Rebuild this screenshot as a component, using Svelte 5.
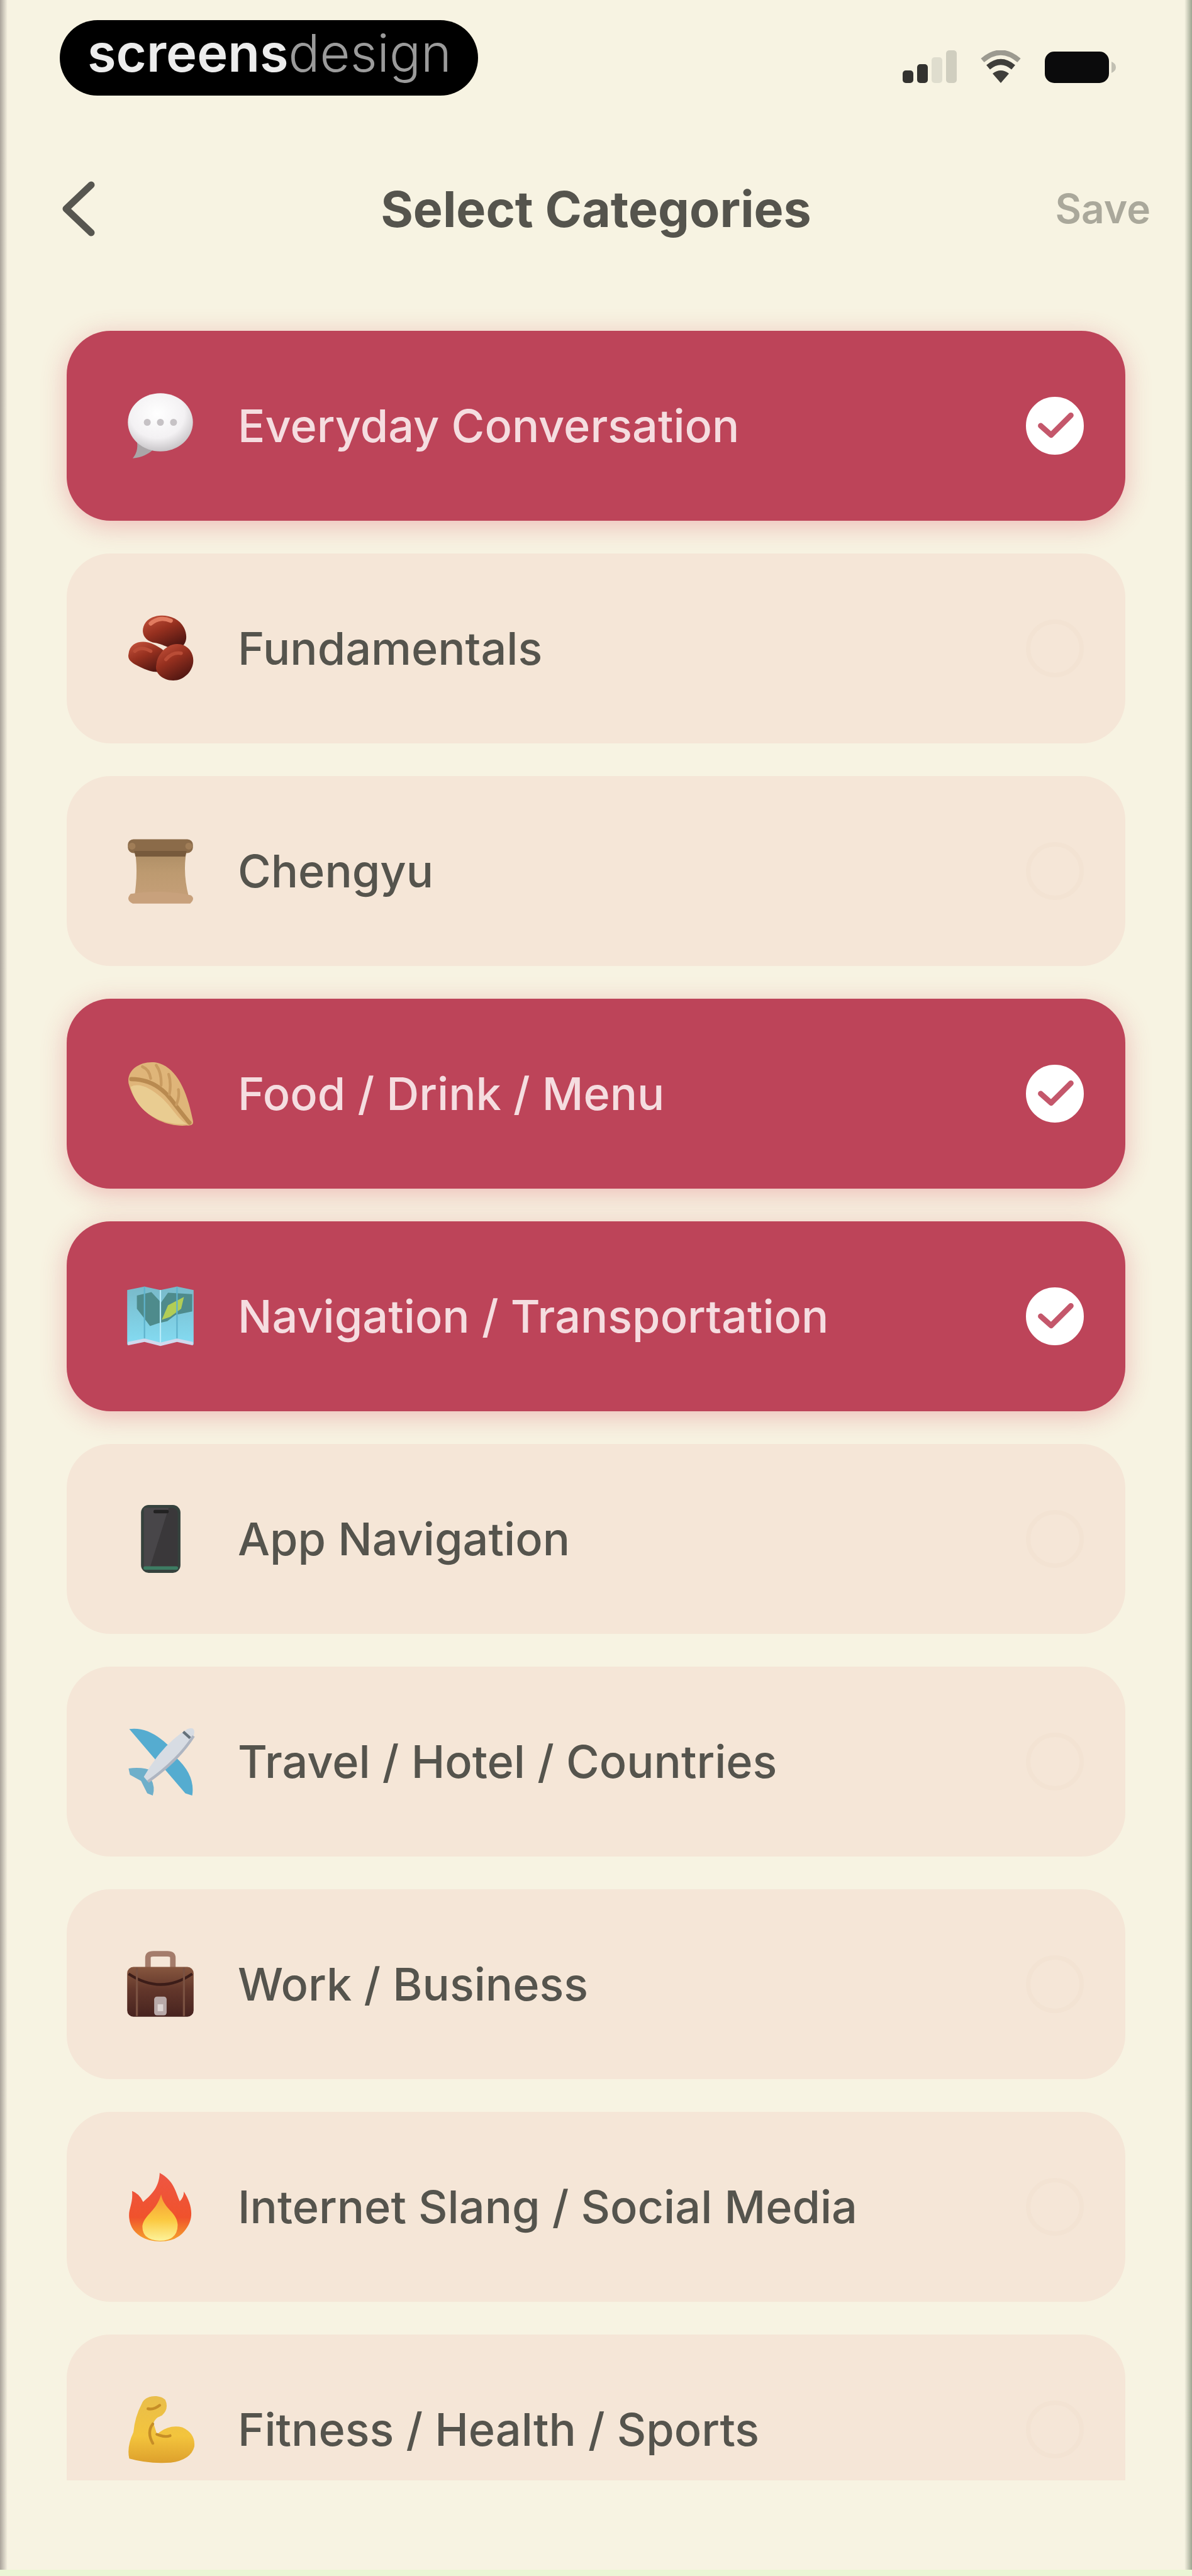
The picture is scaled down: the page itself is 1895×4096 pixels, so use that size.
<script>
  let categories = $state([
    { id: 'chat', name: 'Everyday Conversation', selected: true },
    { id: 'beans', name: 'Fundamentals', selected: false },
    { id: 'scroll', name: 'Chengyu', selected: false },
    { id: 'dumpling', name: 'Food / Drink / Menu', selected: true },
    { id: 'map', name: 'Navigation / Transportation', selected: true },
    { id: 'phone', name: 'App Navigation', selected: false },
    { id: 'plane', name: 'Travel / Hotel / Countries', selected: false },
    { id: 'briefcase', name: 'Work / Business', selected: false },
    { id: 'fire', name: 'Internet Slang / Social Media', selected: false },
    { id: 'arm', name: 'Fitness / Health / Sports', selected: false }
  ]);
</script>

<svg class="defs" aria-hidden="true">
  <defs>
    <radialGradient id="bubble" cx=".45" cy=".35" r=".65">
      <stop offset="0" stop-color="#fff" /><stop offset=".65" stop-color="#f3f1f3" /><stop offset="1" stop-color="#c9c6c9" />
    </radialGradient>
    <linearGradient id="bean" x1="0" y1="0" x2=".6" y2="1">
      <stop offset="0" stop-color="#c9563f" /><stop offset=".5" stop-color="#96301f" /><stop offset="1" stop-color="#521712" />
    </linearGradient>
    <linearGradient id="paper" x1="0" y1="0" x2="0" y2="1">
      <stop offset="0" stop-color="#a98a62" /><stop offset=".5" stop-color="#bd9a70" /><stop offset="1" stop-color="#c59f78" />
    </linearGradient>
    <linearGradient id="sea" x1="0" y1="0" x2="0" y2="1">
      <stop offset="0" stop-color="#79b9c9" /><stop offset="1" stop-color="#84dcf3" />
    </linearGradient>
    <linearGradient id="leather" x1="0" y1="0" x2="0" y2="1">
      <stop offset="0" stop-color="#87573f" /><stop offset=".45" stop-color="#63372b" /><stop offset="1" stop-color="#47231f" />
    </linearGradient>
    <linearGradient id="flame" x1="0" y1="0" x2="0" y2="1">
      <stop offset="0" stop-color="#ee5643" /><stop offset=".65" stop-color="#f0522c" /><stop offset="1" stop-color="#f6a52c" />
    </linearGradient>
    <linearGradient id="core" x1="0" y1="0" x2="0" y2="1">
      <stop offset="0" stop-color="#f59a35" /><stop offset=".55" stop-color="#fbc940" /><stop offset="1" stop-color="#fdf39a" />
    </linearGradient>
    <linearGradient id="skin" x1="0" y1="0" x2="0" y2="1">
      <stop offset="0" stop-color="#e9be4b" /><stop offset=".6" stop-color="#f3c43d" /><stop offset="1" stop-color="#dda02c" />
    </linearGradient>
  </defs>
</svg>

<main class="screen">
  <div class="status">
    <div class="brand"><strong>screens</strong><span>design</span></div>
    <div class="indicators" aria-hidden="true">
      <svg width="88" height="54" viewBox="0 0 88 54">
        <rect x="0" y="32" width="17" height="20" rx="5" fill="#33322f" />
        <rect x="23" y="22" width="17" height="30" rx="5" fill="#33322f" />
        <rect x="46" y="11" width="17" height="41" rx="5" fill="#dfddce" />
        <rect x="69" y="0" width="17" height="52" rx="5" fill="#d0cebf" />
      </svg>
      <svg width="68" height="54" viewBox="0 0 68 54">
        <path d="M5 16Q34 -9 63 16" fill="none" stroke="#9c9a90" stroke-width="8" />
        <path d="M14 27Q34 10 54 27" fill="none" stroke="#3f3e3a" stroke-width="9" />
        <path d="M34 52L21 37Q34 27 47 37Z" fill="#3f3e3a" />
      </svg>
      <svg width="116" height="54" viewBox="0 0 116 54">
        <rect x="2" y="2" width="102" height="50" rx="15" fill="#0b0b0c" />
        <path d="M108 18Q115 21 115 27T108 36Z" fill="#c2c0b3" />
      </svg>
    </div>
  </div>

  <header>
    <button class="back" aria-label="Back">
      <svg width="56" height="90" viewBox="0 0 56 90" aria-hidden="true">
        <path d="M49 7L9 45L49 83" fill="none" stroke="#575650" stroke-width="11" stroke-linecap="round" stroke-linejoin="round" />
      </svg>
    </button>
    <h1>Select Categories</h1>
    <button class="save">Save</button>
  </header>

  <div class="list">
    {#each categories as c (c.id)}
      <label class="card" class:selected={c.selected}>
        <svg class="icon" viewBox="0 0 100 100" aria-hidden="true">
          {#if c.id === 'chat'}
            <path d="M15 68Q20 85 10 97Q30 95 42 82Z" fill="#aaa6a8" />
            <ellipse cx="50" cy="45" rx="47" ry="42" fill="url(#bubble)" />
            <g fill="#c6c2c5"><circle cx="31" cy="45" r="5" /><circle cx="50" cy="45" r="5" /><circle cx="69" cy="45" r="5" /></g>
          {:else if c.id === 'beans'}
            <path d="M29 12C42 -3 74 0 84 20C93 38 83 54 67 50C56 47 53 44 43 42C25 40 20 24 29 12Z" fill="url(#bean)" />
            <path d="M4 58C6 40 25 37 40 44C56 51 67 63 61 76C54 89 35 84 21 77C8 71 2 66 4 58Z" fill="url(#bean)" />
            <path d="M50 58C60 42 82 38 93 53C104 69 94 91 74 96C55 99 41 86 44 74Q45 64 50 58Z" fill="url(#bean)" />
            <path d="M36 14Q49 3 65 10" fill="none" stroke="#e17b60" stroke-width="6" stroke-linecap="round" />
            <path d="M13 54Q22 46 36 54M58 66Q67 55 80 57" fill="none" stroke="#b94c36" stroke-width="5" stroke-linecap="round" />
          {:else if c.id === 'scroll'}
            <path d="M12 14H89Q81 50 91 87Q48 82 12 90Q19 48 12 14Z" fill="url(#paper)" />
            <rect x="3" y="4" width="94" height="20" rx="8" fill="#8b6b49" />
            <path d="M12 21H88L86 29H14Z" fill="#775a3c" />
            <path d="M7 83Q50 76 94 85Q101 90 93 97H10Q-1 92 7 83Z" fill="#c8a17c" />
            <circle cx="9" cy="14" r="5" fill="#a07d57" /><circle cx="91" cy="14" r="5" fill="#a07d57" />
          {:else if c.id === 'dumpling'}
            <path d="M4 35C1 15 22 2 44 5C72 11 88 43 97 89Q99 97 88 96C53 99 15 77 4 35Z" fill="#dfb579" />
            <path d="M7 40C20 33 38 43 54 58C69 73 77 89 89 94C49 96 15 76 7 40Z" fill="#e9cc91" />
            <path d="M8 29Q43 29 66 59T92 92" fill="none" stroke="#b98a50" stroke-width="6" stroke-linecap="round" />
            <path d="M24 11Q34 15 36 28M44 9Q52 20 51 38M62 22Q66 35 63 51M76 44Q78 54 73 66" fill="none" stroke="#c99b60" stroke-width="4" stroke-linecap="round" />
          {:else if c.id === 'map'}
            <path d="M2 12L27 7L50 12L74 7L98 12V91L74 86L50 92L27 86L2 91Z" fill="url(#sea)" />
            <path d="M16 20L37 15L51 30L61 16L96 18V43L72 48L60 57L47 60L35 64L26 52L16 39Z" fill="#4e8b8c" />
            <path d="M52 55L61 34L84 22L80 39L64 51Z" fill="#b2cd56" />
            <path d="M27 7V86M74 7V86" stroke="#5fb2cc" stroke-width="2" />
            <path d="M50 12V92" stroke="#b8ecfa" stroke-width="2" />
            <path d="M3 87L27 82L50 88L74 82L97 87V92L74 87L50 93L27 87L3 92Z" fill="#d1d8ed" />
          {:else if c.id === 'phone'}
            <rect x="22" y="1" width="57" height="98" rx="11" fill="#35423d" />
            <rect x="26" y="5" width="49" height="90" rx="8" fill="#3a383a" />
            <path d="M26 5H62L34 94H26Z" fill="#484649" />
            <rect x="40" y="8" width="22" height="5" rx="2" fill="#222" />
            <path d="M28 92H73" stroke="#3d7c63" stroke-width="5" stroke-linecap="round" />
          {:else if c.id === 'plane'}
            <path d="M5 3Q33 -1 62 27L46 51Z" fill="#55acd0" />
            <path d="M69 41Q101 68 96 99L86 96L51 55Z" fill="#55acd0" />
            <path d="M4 60Q24 57 40 64L36 74Q43 87 39 99L31 96L22 78L6 69Z" fill="#6eafca" />
            <path d="M26 72Q53 25 89 3Q102 -2 98 13Q76 48 32 79Z" fill="#d7dce3" />
            <path d="M32 79Q76 48 98 13" fill="none" stroke="#aeb5c1" stroke-width="4" />
            <path d="M83 7L93 16" stroke="#65717a" stroke-width="4" />
          {:else if c.id === 'briefcase'}
            <path d="M32 29V12Q32 6 40 6H60Q68 6 68 12V29" fill="none" stroke="#a47c6b" stroke-width="8" />
            <rect x="2" y="25" width="96" height="72" rx="9" fill="url(#leather)" />
            <path d="M4 35Q51 66 96 35" fill="none" stroke="#3c1d19" stroke-width="4" />
            <path d="M16 26V96M84 26V96" stroke="#7a5141" stroke-width="3" />
            <rect x="41" y="68" width="18" height="27" rx="4" fill="#b9aaa9" />
            <path d="M46 79H54V89H46Z" fill="#ded5d3" />
          {:else if c.id === 'fire'}
            <path d="M49 1C70 12 72 29 78 42Q84 36 84 28C96 47 99 66 87 82Q75 100 50 100C25 100 7 87 5 67C3 53 11 46 9 27Q20 31 25 43C39 31 48 21 49 1Z" fill="url(#flame)" />
            <path d="M51 32C55 54 74 57 75 76Q75 99 49 99Q23 98 24 77C28 60 44 57 51 32Z" fill="url(#core)" />
          {:else if c.id === 'arm'}
            <path d="M23 13C27 1 47 -2 57 7Q63 20 52 30Q42 33 40 41L45 57Q62 42 82 47Q101 56 99 75Q94 94 65 98Q33 100 5 92Q1 75 11 54Q13 32 23 13Z" fill="url(#skin)" />
            <path d="M39 42Q30 54 39 70M45 57Q57 62 64 59M49 15Q40 22 32 20" fill="none" stroke="#c68d27" stroke-width="4" stroke-linecap="round" />
          {/if}
        </svg>
        <span class="name">{c.name}</span>
        <span class="tick">
          <input type="checkbox" bind:checked={c.selected} />
          {#if c.selected}
            <svg viewBox="0 0 94 94" aria-hidden="true">
              <path d="M24 47L41 62L73 30" fill="none" stroke="#c4576b" stroke-width="9" stroke-linecap="round" stroke-linejoin="round" />
            </svg>
          {/if}
        </span>
      </label>
    {/each}
  </div>
</main>

<style>
  :global(body) { margin: 0; background: #f7f3e2; }
  .defs { position: absolute; width: 0; height: 0; }
  .screen {
    box-sizing: border-box;
    height: 100vh;
    display: flex;
    flex-direction: column;
    padding-bottom: 142px;
    border-bottom: 10px solid #ebf6d5;
    background:
      linear-gradient(to right, #aaa49b, #f7f3e200) left / 12px 100% no-repeat,
      linear-gradient(to left, #9da591, #f7f3e200) right / 12px 100% no-repeat,
      #f7f3e2;
    font-family: Inter, "Liberation Sans", sans-serif;
    color: #55544d;
  }
  button { border: 0; padding: 0; background: none; font: inherit; color: inherit; }
  svg { display: block; }

  .status {
    flex: none;
    display: flex;
    justify-content: space-between;
    align-items: flex-start;
    padding: 32px 120px 0 95px;
  }
  .brand {
    box-sizing: border-box;
    height: 120px;
    padding: 0 42px 0 44px;
    border-radius: 60px;
    background: #000;
    font-size: 83px;
    line-height: 104px;
    color: #9b9b9b;
  }
  .brand strong { font-weight: 600; color: #ececec; }
  .brand span { font-weight: 300; }
  .indicators { display: flex; gap: 34px; padding-top: 48px; }

  header {
    flex: none;
    display: grid;
    grid-template-columns: 1fr auto 1fr;
    align-items: center;
    height: 112px;
    padding: 124px 66px 0;
  }
  .back { justify-self: start; padding-left: 30px; }
  h1 { margin: 0; font-size: 79px; line-height: 96px; font-weight: 700; }
  .save { justify-self: end; font-size: 64px; line-height: 80px; font-weight: 600; color: #aaa89b; }

  .list {
    flex: 1;
    min-height: 0;
    overflow: hidden;
    display: flex;
    flex-direction: column;
    gap: 52px;
    padding: 138px 106px 0;
  }
  .card {
    flex: none;
    box-sizing: border-box;
    min-height: 302px;
    display: flex;
    align-items: center;
    gap: 68px;
    padding: 0 66px 0 94px;
    border-radius: 70px;
    background: #f5e6d7;
    font-size: 72px;
    line-height: 96px;
    font-weight: 500;
  }
  .card.selected {
    background: #bd4459;
    color: #f5dde0;
    box-shadow: 0 8px 40px #d8445950;
  }
  .icon { flex: none; width: 110px; height: 110px; overflow: visible; }
  .name { flex: 1; }
  .tick { display: grid; width: 92px; height: 92px; }
  .tick > :global(*) { grid-area: 1 / 1; }
  .tick input {
    appearance: none;
    box-sizing: border-box;
    width: 92px;
    height: 92px;
    margin: 0;
    border: 7px solid #f3e3d3;
    border-radius: 50%;
  }
  .tick input:checked { background: #fff; border-color: #fff; }
  .tick svg { pointer-events: none; z-index: 1; }
</style>
